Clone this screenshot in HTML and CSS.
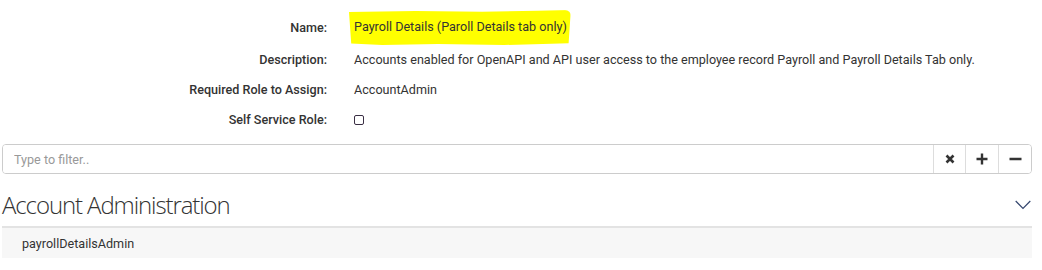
FILE: index.html
```html
<!DOCTYPE html>
<html>
<head>
<meta charset="utf-8">
<link rel="stylesheet" href="styles.css">
</head>
<body>
<div class="page">
  <div class="details">
    <div class="row name-row">
      <div class="label">Name:</div>
      <div class="value"><span class="highlight">Payroll Details (Paroll Details tab only)</span></div>
    </div>
    <div class="row">
      <div class="label">Description:</div>
      <div class="value">Accounts enabled for OpenAPI and API user access to the employee record Payroll and Payroll Details Tab only.</div>
    </div>
    <div class="row">
      <div class="label">Required Role to Assign:</div>
      <div class="value">AccountAdmin</div>
    </div>
    <div class="row">
      <div class="label">Self Service Role:</div>
      <div class="value"><span class="checkbox"></span></div>
    </div>
  </div>

  <div class="filter">
    <input class="filter-input" type="text" placeholder="Type to filter..">
    <button class="filter-btn" aria-label="clear">
      <svg width="10" height="10" viewBox="0 0 10 10"><path d="M1.5 1.5 L8.5 8.5 M8.5 1.5 L1.5 8.5" stroke="#333" stroke-width="2.6" stroke-linecap="butt"/></svg>
    </button>
    <button class="filter-btn" aria-label="expand">
      <svg width="12" height="12" viewBox="0 0 12 12"><path d="M6 0.5 V11.5 M0.5 6 H11.5" stroke="#333" stroke-width="2.4"/></svg>
    </button>
    <button class="filter-btn" aria-label="collapse">
      <svg width="13" height="12" viewBox="0 0 13 12"><path d="M0.5 6 H12.5" stroke="#333" stroke-width="2.4"/></svg>
    </button>
  </div>

  <div class="group-header">
    <h2 class="group-title">Account Administration</h2>
    <svg class="chevron" width="16" height="10" viewBox="0 0 16 10"><path d="M0.7 1 L8 8.5 L15.3 1" fill="none" stroke="#34466e" stroke-width="1.2"/></svg>
  </div>
  <div class="group-item">payrollDetailsAdmin</div>
</div>
</body>
</html>
```

FILE: styles.css
```css
* { box-sizing: border-box; }
html, body {
  margin: 0;
  padding: 0;
  background: #fff;
}
body {
  font-family: Roboto, "Liberation Sans", Arial, sans-serif;
  font-size: 12.6px;
  color: #333;
}
.page {
  width: 1032px;
  padding: 10px 0 0 2px;
}
.details {
  display: flex;
  flex-direction: column;
}
.row {
  display: grid;
  grid-template-columns: 325px 1fr;
  column-gap: 27px;
  align-items: center;
  height: 30px;
}
.row.name-row {
  height: 34px;
}
.label {
  text-align: right;
  font-weight: 500;
  color: #333;
}
.value {
  color: #333;
}
.highlight {
  display: inline-block;
  background: #ffff00;
  margin-left: -5px;
  padding: 8px 4px 9px 5px;
  line-height: 18px;
  border-radius: 2px 6px 3px 4px;
  clip-path: polygon(0 6%, 30% 3%, 60% 5%, 85% 2%, 100% 0, 99% 95%, 70% 100%, 40% 97%, 15% 100%, 1% 96%);
}
.checkbox {
  display: inline-block;
  width: 10px;
  height: 10px;
  border: 1px solid #3a2f44;
  border-radius: 2px;
  vertical-align: middle;
  margin-top: -1px;
}
.filter {
  display: flex;
  margin-top: 10px;
  height: 30px;
  border: 1px solid #ccc;
  border-radius: 4px;
  overflow: hidden;
}
.filter-input {
  flex: 1;
  border: none;
  outline: none;
  padding: 0 11px;
  font-family: Roboto, "Liberation Sans", Arial, sans-serif;
  font-size: 12.6px;
  color: #333;
  background: #fff;
}
.filter-input::placeholder {
  color: #999;
}
.filter-btn {
  width: 33px;
  border: none;
  border-left: 1px solid #ddd;
  background: #fff;
  padding: 0;
  display: flex;
  align-items: center;
  justify-content: center;
}
.filter-btn:first-of-type {
  width: 32px;
}
.group-header {
  display: flex;
  justify-content: space-between;
  align-items: center;
  height: 52px;
}
.group-title {
  margin: 0;
  padding-top: 10px;
  font-family: "Open Sans", "Liberation Sans", sans-serif;
  font-weight: 300;
  font-size: 24px;
  letter-spacing: -1.1px;
  color: #333;
  line-height: 30px;
}
.chevron {
  margin-right: 1px;
  margin-top: 10px;
}
.group-item {
  height: 32px;
  border-top: 2px solid #e3e3e3;
  background: #f7f7f7;
  padding-left: 20px;
  display: flex;
  align-items: center;
}
```
